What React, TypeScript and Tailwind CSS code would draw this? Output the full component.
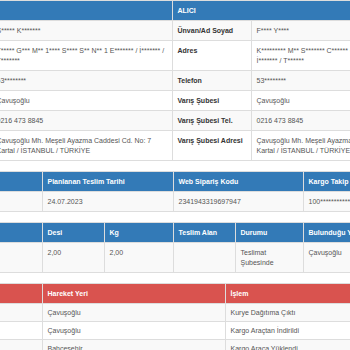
import React from 'react';

const cell = 'border border-[#ddd] px-[4.5px] py-[4.5px] align-top text-left';
const tight = 'border border-[#ddd] px-[4.5px] py-[3.5px] align-top text-left';
const head = 'border border-[#ddd] px-[4.5px] py-[4.5px] text-left font-bold text-white';

const parties = [
  {
    label: 'Ünvan/Ad Soyad',
    sender: 'S***** K*******',
    receiver: 'F**** Y****',
  },
  {
    label: 'Adres',
    sender: ['T***** G*** M** 1**** S**** S** N** 1 E******* / İ******* /', 'T*******'],
    receiver: ['K********* M** S******* C****** C*******', 'İ******* / T******'],
  },
  { label: 'Telefon', sender: '53********', receiver: '53********' },
  { label: 'Varış Şubesi', sender: 'Çavuşoğlu', receiver: 'Çavuşoğlu' },
  { label: 'Varış Şubesi Tel.', sender: '0216 473 8845', receiver: '0216 473 8845' },
  {
    label: 'Varış Şubesi Adresi',
    sender: ['Çavuşoğlu Mh. Meşeli Ayazma Caddesi Cd. No: 7', 'Kartal / İSTANBUL / TÜRKİYE'],
    receiver: ['Çavuşoğlu Mh. Meşeli Ayazma Caddesi Cd. No: 7', 'Kartal / İSTANBUL / TÜRKİYE'],
  },
];

const movements = [
  { place: 'Çavuşoğlu', action: 'Kurye Dağıtıma Çıktı' },
  { place: 'Çavuşoğlu', action: 'Kargo Araçtan İndirildi' },
  { place: 'Bahçeşehir', action: 'Kargo Araca Yüklendi' },
  { place: 'Bahçeşehir', action: 'Kargo Şubeden Çıktı' },
];

function Lines({ value }: { value: string | string[] }) {
  if (typeof value === 'string') return <>{value}</>;
  return (
    <>
      {value.map((line, i) => (
        <div key={i} className="whitespace-nowrap">{line}</div>
      ))}
    </>
  );
}

function PartyTable() {
  return (
    <table className="w-full table-fixed border-collapse mb-[10px]">
      <colgroup>
        <col className="w-[79px]" />
        <col className="w-[181px]" />
        <col className="w-[79px]" />
        <col className="w-[181px]" />
      </colgroup>
      <thead>
        <tr className="bg-[#337ab7]">
          <th colSpan={2} className={head}>GÖNDERİCİ</th>
          <th colSpan={2} className={head}>ALICI</th>
        </tr>
      </thead>
      <tbody>
        {parties.map((row, i) => (
          <tr key={row.label} className={i % 2 === 0 ? 'bg-[#f9f9f9]' : 'bg-white'}>
            <td className={`${cell} font-bold text-[#333] whitespace-nowrap`}>{row.label}</td>
            <td className={`${cell} whitespace-nowrap`}><Lines value={row.sender} /></td>
            <td className={`${cell} font-bold text-[#333] whitespace-nowrap`}>{row.label}</td>
            <td className={`${cell} whitespace-nowrap`}><Lines value={row.receiver} /></td>
          </tr>
        ))}
      </tbody>
    </table>
  );
}

function ShipmentTable() {
  return (
    <table className="w-full table-fixed border-collapse mb-[10px]">
      <colgroup>
        <col className="w-[130px]" />
        <col className="w-[131px]" />
        <col className="w-[130px]" />
        <col className="w-[129px]" />
      </colgroup>
      <thead>
        <tr className="bg-[#337ab7]">
          <th className={head}>Gönderi No</th>
          <th className={`${head} whitespace-nowrap`}>Planlanan Teslim Tarihi</th>
          <th className={head}>Web Sipariş Kodu</th>
          <th className={`${head} whitespace-nowrap`}>Kargo Takip No</th>
        </tr>
      </thead>
      <tbody>
        <tr className="bg-[#f9f9f9]">
          <td className={cell}></td>
          <td className={cell}>24.07.2023</td>
          <td className={cell}>2341943319697947</td>
          <td className={`${cell} whitespace-nowrap`}>100*************</td>
        </tr>
      </tbody>
    </table>
  );
}

function PackageTable() {
  return (
    <table className="w-full table-fixed border-collapse mb-[10px]">
      <colgroup>
        <col className="w-[65px]" />
        <col className="w-[65px]" />
        <col className="w-[62px]" />
        <col className="w-[69px]" />
        <col className="w-[62px]" />
        <col className="w-[68px]" />
        <col className="w-[65px]" />
        <col className="w-[64px]" />
      </colgroup>
      <thead>
        <tr className="bg-[#337ab7]">
          <th className={head}>Adet</th>
          <th className={head}>Tür</th>
          <th className={head}>Desi</th>
          <th className={head}>Kg</th>
          <th className={`${head} whitespace-nowrap`}>Teslim Alan</th>
          <th className={head}>Durumu</th>
          <th className={`${head} whitespace-nowrap`}>Bulunduğu Yer</th>
          <th className={head}>Ödeme</th>
        </tr>
      </thead>
      <tbody>
        <tr className="bg-[#f9f9f9]">
          <td className={cell}></td>
          <td className={cell}></td>
          <td className={cell}>2,00</td>
          <td className={cell}>2,00</td>
          <td className={cell}></td>
          <td className={cell}>
            <div>Teslimat</div>
            <div>Şubesinde</div>
          </td>
          <td className={cell}>Çavuşoğlu</td>
          <td className={cell}></td>
        </tr>
      </tbody>
    </table>
  );
}

function MovementTable() {
  return (
    <table className="w-full table-fixed border-collapse">
      <colgroup>
        <col className="w-[130px]" />
        <col className="w-[183px]" />
        <col className="w-[207px]" />
      </colgroup>
      <thead>
        <tr className="bg-[#d9534f]">
          <th className={head}>Tarih</th>
          <th className={head}>Hareket Yeri</th>
          <th className={head}>İşlem</th>
        </tr>
      </thead>
      <tbody>
        {movements.map((m, i) => (
          <tr key={i} className={i % 2 === 0 ? 'bg-[#f9f9f9]' : 'bg-white'}>
            <td className={tight}></td>
            <td className={tight}>{m.place}</td>
            <td className={tight}>{m.action}</td>
          </tr>
        ))}
      </tbody>
    </table>
  );
}

export default function App() {
  return (
    <div className="w-[350px] h-[350px] overflow-hidden bg-white font-['Liberation_Sans',Arial,sans-serif] text-[7px] leading-[10px] text-[#555]">
      <div className="w-[520px] -ml-[88px]">
        <PartyTable />
        <ShipmentTable />
        <PackageTable />
        <MovementTable />
      </div>
    </div>
  );
}
